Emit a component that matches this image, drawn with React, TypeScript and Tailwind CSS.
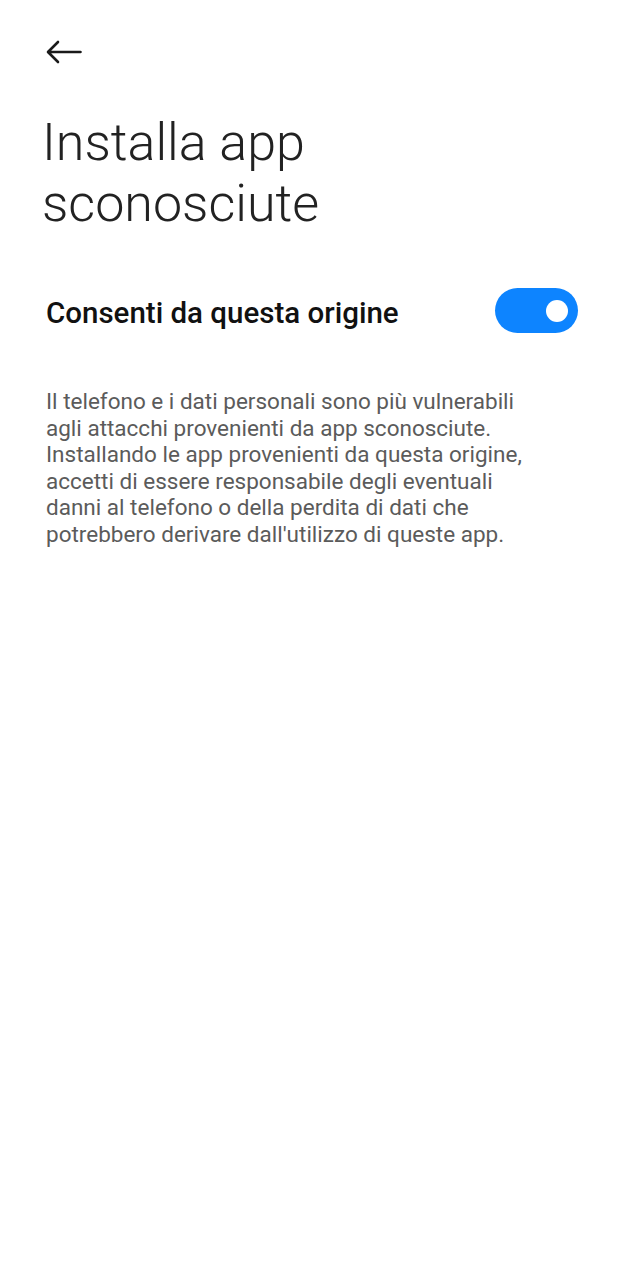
import React from "react";

export default function App() {
  const lines = [
    "Il telefono e i dati personali sono più vulnerabili",
    "agli attacchi provenienti da app sconosciute.",
    "Installando le app provenienti da questa origine,",
    "accetti di essere responsabile degli eventuali",
    "danni al telefono o della perdita di dati che",
    "potrebbero derivare dall'utilizzo di queste app.",
  ];
  return (
    <div className="w-[625px] h-[1280px] bg-white flex flex-col" style={{ fontFamily: "Roboto, 'Noto Sans', sans-serif" }}>
      <div className="pl-[46px] pt-[40px] h-[112px]">
        <svg width="38" height="26" viewBox="0 0 38 26" fill="none">
          <path d="M34.5 12H2.5M12 2L2 12L12 22" stroke="#1a1a1a" strokeWidth="2.6" strokeLinecap="round" strokeLinejoin="round" />
        </svg>
      </div>
      <h1 className="pl-[42px] text-[52px] leading-[61px] font-light text-[#222]">
        Installa app
        <br />
        sconosciute
      </h1>
      <div className="mt-[54px] pl-[46px] pr-[47px] flex items-center justify-between h-[45px]">
        <span className="mt-[5px] text-[29.5px] font-medium text-[#111]">Consenti da questa origine</span>
        <div className="w-[83px] h-[45px] rounded-full bg-[#0d84ff] flex items-center justify-end pr-[10px]">
          <div className="w-[22px] h-[22px] rounded-full bg-white" />
        </div>
      </div>
      <p className="mt-[55px] pl-[46px] text-[22.5px] leading-[26.6px] text-[#5b5b5b]">
        {lines.map((l, i) => (
          <React.Fragment key={i}>
            {l}
            <br />
          </React.Fragment>
        ))}
      </p>
    </div>
  );
}
